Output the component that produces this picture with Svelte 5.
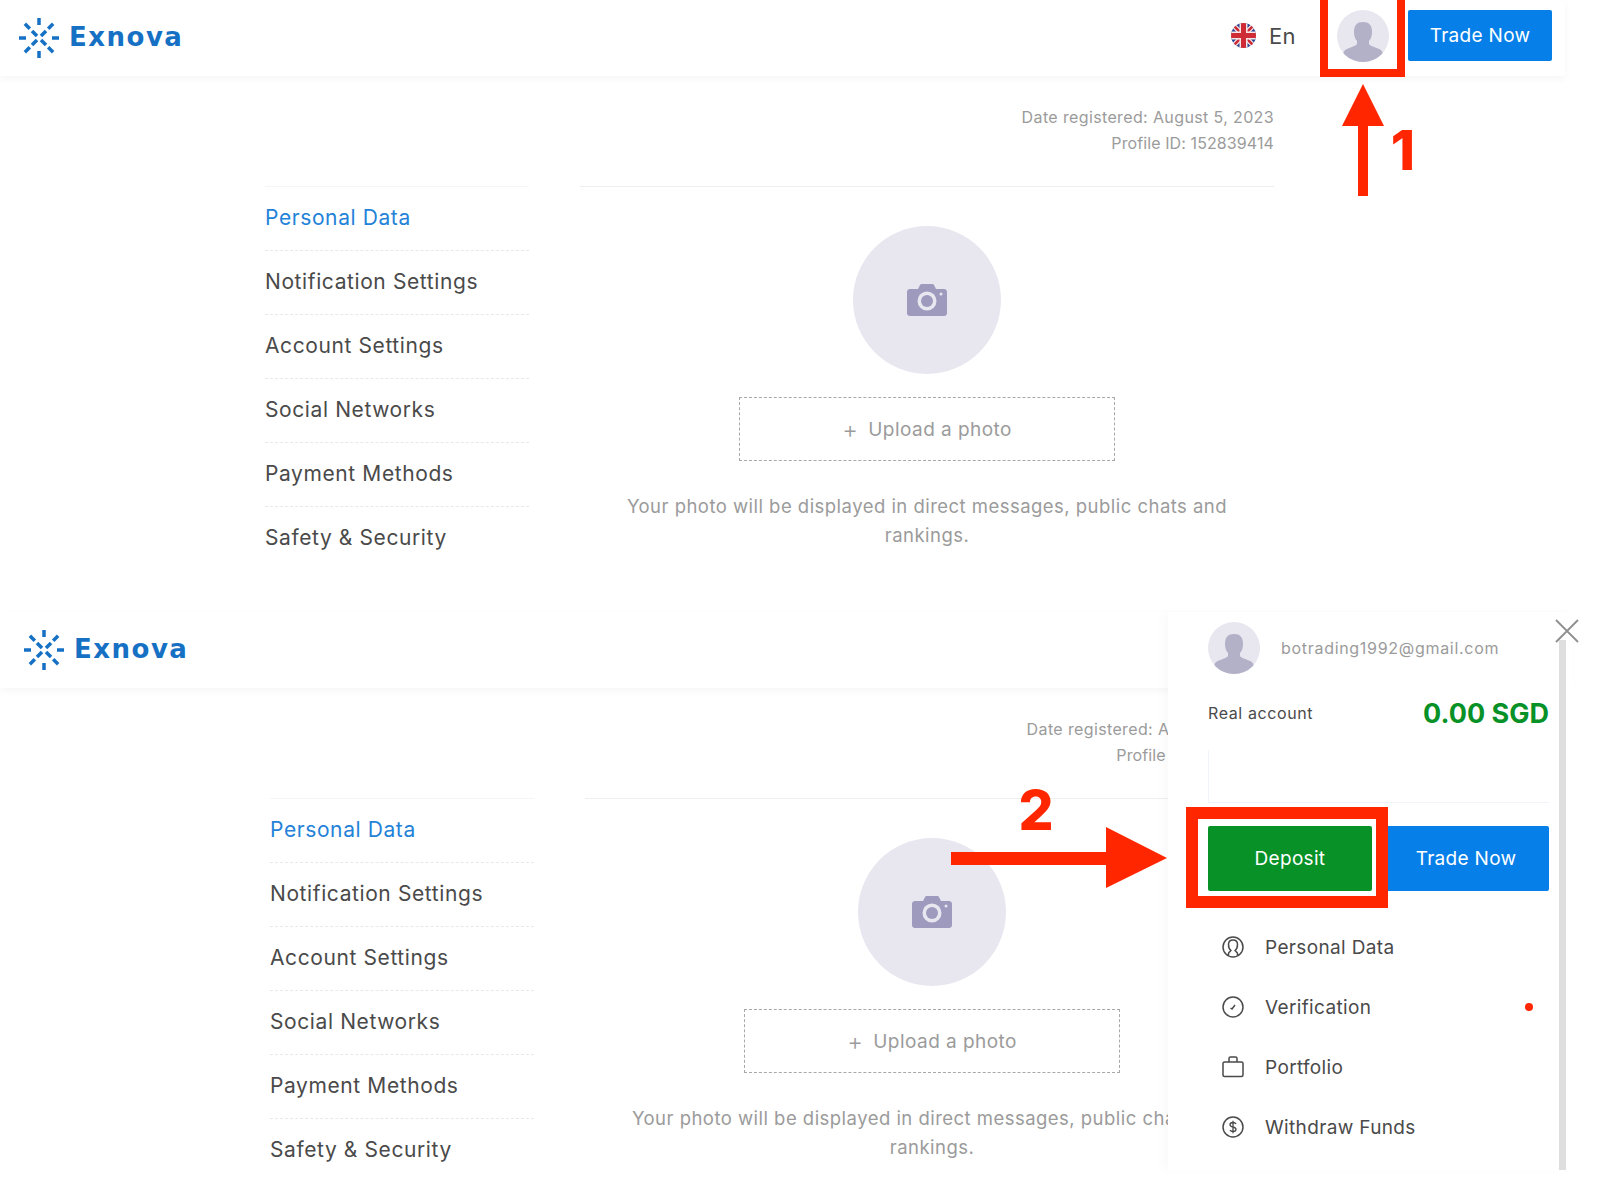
<script>
	const sideItems = ['Personal Data', 'Notification Settings', 'Account Settings', 'Social Networks', 'Payment Methods', 'Safety & Security'];
	const logoSpokes = [0, 45, 90, 135, 180, 225, 270, 315];
</script>

{#snippet logo()}
	<div class="logo">
		<svg width="42" height="42" viewBox="-21 -21 42 42" fill="none" stroke="#1670c4" stroke-width="3.500" stroke-linecap="butt">
			{#each logoSpokes as a}
				<line x1="0" y1="-20" x2="0" y2="-13" transform="rotate({a})" />
			{/each}
			<line x1="-7" y1="-7" x2="-2" y2="-2" /><line x1="7" y1="-7" x2="2" y2="-2" />
			<line x1="-7" y1="7" x2="-2" y2="2" /><line x1="7" y1="7" x2="2" y2="2" />
		</svg>
		<span class="logo-text">Exnova</span>
	</div>
{/snippet}

{#snippet person(size)}
	<svg class="person" width={size} height={size} viewBox="0 0 52 52">
		<circle cx="26" cy="26" r="26" fill="#e8e7f0" />
		<clipPath id="avatar-clip"><circle cx="26" cy="26" r="26" /></clipPath>
		<path clip-path="url(#avatar-clip)" d="M17 22c0-7 3-10 9-10s9 3 9 10c0 4-1 7-3 9v3c1 2 6 3 10 5 3 1 5 4 5 13H5c0-9 2-12 5-13 4-2 9-3 10-5v-3c-2-2-3-5-3-9z" fill="#b3b1c8" />
	</svg>
{/snippet}

{#snippet page()}
	<header class="topbar">
		{@render logo()}
	</header>
	<div class="meta">
		<div>Date registered: August 5, 2023</div>
		<div class="profile-id">Profile ID: 152839414</div>
	</div>
	<div class="content">
		<nav class="side">
			{#each sideItems as item, i}
				<div class="side-item" class:active={i === 0}>{item}</div>
			{/each}
		</nav>
		<main class="main">
			<div class="photo">
				<svg width="40" height="32" viewBox="0 0 40 32">
					<path d="M3 5h8l2-4c.3-.6 1-1 1.500-1h11c.6 0 1.200.4 1.500 1l2 4h8c1.700 0 3 1.300 3 3v21c0 1.700-1.300 3-3 3H3c-1.700 0-3-1.300-3-3V8c0-1.700 1.300-3 3-3z" fill="#9d9abd" />
					<circle cx="20" cy="17" r="9.500" fill="#e8e7f0" />
					<circle cx="20" cy="17" r="6" fill="#9d9abd" />
					<circle cx="34" cy="10" r="1.500" fill="#e8e7f0" />
				</svg>
			</div>
			<div class="upload"><span class="plus">+</span>Upload a photo</div>
			<p class="hint">Your photo will be displayed in direct messages, public chats and rankings.</p>
		</main>
	</div>
{/snippet}

<div class="sheet">
	<section class="shot">
		{@render page()}
		<div class="top-actions">
			<svg class="flag" width="25" height="25" viewBox="0 0 25 25">
				<clipPath id="flag-clip"><circle cx="12.500" cy="12.500" r="12.500" /></clipPath>
				<g clip-path="url(#flag-clip)">
					<rect width="25" height="25" fill="#27408f" />
					<path d="M0 0L25 25M25 0L0 25" stroke="#f4e6e6" stroke-width="5" />
					<path d="M0 0L25 25M25 0L0 25" stroke="#cf2b36" stroke-width="2.500" />
					<path d="M12.500 0V25M0 12.500H25" stroke="#f4e6e6" stroke-width="8" />
					<path d="M12.500 0V25M0 12.500H25" stroke="#cf2b36" stroke-width="5" />
				</g>
			</svg>
			<span class="lang">En</span>
			{@render person(52)}
			<button class="btn blue top-trade">Trade Now</button>
		</div>
	</section>

	<section class="shot second">
		{@render page()}
		<aside class="panel">
			<div class="panel-body">
				<div class="panel-user">
					{@render person(52)}
					<span class="email">botrading1992@gmail.com</span>
				</div>
				<div class="balance">
					<span>Real account</span>
					<strong>0.00 SGD</strong>
				</div>
				<div class="empty-box"></div>
				<div class="panel-btns">
					<button class="btn green">Deposit</button>
					<button class="btn blue">Trade Now</button>
				</div>
				<ul class="menu">
					<li>
						<svg width="22" height="22" viewBox="0 0 22 22" fill="none" stroke="#4a4a4a" stroke-width="1.500">
							<circle cx="11" cy="11" r="10" />
							<path d="M6.500 19.500v-2c0-1.500 2-2 2.500-3-2-1.500-2.500-3.500-2.500-6 0-3 2-4.500 4.500-4.500s4.500 1.500 4.500 4.500c0 2.500-.5 4.500-2.500 6 .5 1 2.500 1.500 2.500 3v2" />
						</svg>
						<span>Personal Data</span>
					</li>
					<li>
						<svg width="22" height="22" viewBox="0 0 22 22" fill="none" stroke="#4a4a4a" stroke-width="1.500">
							<circle cx="11" cy="11" r="10" />
							<path d="M8.500 12l1.500 1 3-4" />
						</svg>
						<span>Verification</span>
						<i class="dot"></i>
					</li>
					<li>
						<svg width="22" height="22" viewBox="0 0 22 22" fill="none" stroke="#4a4a4a" stroke-width="1.500">
							<rect x="1" y="6" width="20" height="14.500" rx="1.500" />
							<path d="M7 6V2.500C7 1.700 7.700 1 8.500 1h5c.8 0 1.500.7 1.500 1.500V6" />
						</svg>
						<span>Portfolio</span>
					</li>
					<li>
						<svg width="22" height="22" viewBox="0 0 22 22" fill="none" stroke="#4a4a4a" stroke-width="1.500">
							<circle cx="11" cy="11" r="10" />
							<path d="M14 8c-.5-1-1.500-1.500-3-1.500-1.700 0-3 .8-3 2.200 0 3 6 1.600 6 4.600 0 1.400-1.300 2.200-3 2.200-1.500 0-2.500-.5-3-1.500M11 4.800v12.400" stroke-width="1.300" />
						</svg>
						<span>Withdraw Funds</span>
					</li>
				</ul>
			</div>
			<div class="scrollbar"></div>
			<svg class="close" width="24" height="24" viewBox="0 0 24 24" stroke="#8f8f8f" stroke-width="1.800">
				<path d="M1 1L23 23M23 1L1 23" />
			</svg>
		</aside>
	</section>

	<!-- tutorial annotations painted over the screenshots -->
	<svg class="marks" width="1600" height="1192" viewBox="0 0 1600 1192">
		<rect x="1324" y="-4" width="77" height="77" fill="none" stroke="#ff2600" stroke-width="8" />
		<path d="M1363 84L1384 126H1368V196H1358V126H1342Z" fill="#ff2600" />
		<text class="num" x="1403" y="170">1</text>
		<rect x="1192" y="813" width="190" height="89" fill="none" stroke="#ff2600" stroke-width="12" />
		<path d="M951 852H1106V827L1167 858L1106 888V865H951Z" fill="#ff2600" />
		<text class="num" x="1036" y="830">2</text>
	</svg>
</div>

<style>
	:global(body) {
		margin: 0;
		background: #fff;
	}

	.sheet {
		position: relative;
		width: 1600px;
		height: 1192px;
		overflow: hidden;
		font-family: Inter, "Open Sans", sans-serif;
		color: #4a4a4a;
	}

	.shot {
		position: relative;
		width: 1565px;
		height: 612px;
	}

	.second {
		margin-left: 5px;
	}

	.topbar {
		height: 76px;
		display: flex;
		align-items: center;
		padding-left: 18px;
		box-shadow: 0 3px 8px rgba(0, 0, 0, 0.04);
	}

	.second .topbar {
		margin-left: -5px;
		padding-left: 23px;
	}

	.logo {
		display: flex;
		align-items: center;
		gap: 9px;
	}

	.logo-text {
		font-family: "DejaVu Sans", sans-serif;
		font-weight: 700;
		font-size: 26px;
		line-height: 32px;
		margin-top: -3px;
		color: #1670c4;
		letter-spacing: 1.5px;
	}

	.top-actions {
		position: absolute;
		top: 10px;
		left: 1231px;
		display: flex;
		align-items: center;
		height: 51px;
	}

	.lang {
		font-size: 22px;
		letter-spacing: 0.4px;
		margin: 0 38px 0 13px;
		width: 30px;
	}

	.person {
		display: block;
		flex: none;
	}

	.btn {
		border: 0;
		border-radius: 2px;
		color: #fff;
		font-family: inherit;
		font-size: 19px;
		letter-spacing: 0.3px;
		padding: 0;
	}

	.blue {
		background: #067fe8;
	}

	.green {
		background: #079127;
	}

	.top-trade {
		width: 144px;
		height: 51px;
		margin-left: 19px;
	}

	.meta {
		width: 1274px;
		height: 110px;
		box-sizing: border-box;
		padding-top: 28px;
		text-align: right;
		font-size: 16px;
		letter-spacing: 0.37px;
		line-height: 26px;
		color: #9b9b9b;
	}

	.profile-id {
		letter-spacing: 0.1px;
	}

	.content {
		display: flex;
		padding-left: 265px;
	}

	.side {
		width: 264px;
		margin-right: 51px;
		border-top: 1px solid #f5f5f5;
	}

	.side-item {
		height: 63px;
		line-height: 62px;
		font-size: 21px;
		letter-spacing: 0.6px;
		border-bottom: 1px dashed #e8e8e8;
	}

	.side-item:last-child {
		border-bottom: 0;
	}

	.active {
		color: #2382d8;
	}

	.main {
		width: 694px;
		border-top: 1px solid #eeeeee;
		display: flex;
		flex-direction: column;
		align-items: center;
		padding-top: 39px;
	}

	.photo {
		width: 148px;
		height: 148px;
		border-radius: 50%;
		background: #e8e7f0;
		display: flex;
		align-items: center;
		justify-content: center;
	}

	.upload {
		width: 376px;
		height: 64px;
		box-sizing: border-box;
		margin-top: 23px;
		border: 1px dashed #a8a8a8;
		display: flex;
		align-items: center;
		justify-content: center;
		font-size: 19px;
		letter-spacing: 0.45px;
		color: #9b9b9b;
	}

	.plus {
		font-size: 24px;
		margin-right: 10px;
		font-weight: 300;
	}

	.hint {
		width: 640px;
		margin: 31px 0 0;
		text-align: center;
		font-size: 18.500px;
		letter-spacing: 0.47px;
		line-height: 29px;
		color: #9b9b9b;
	}

	.panel {
		position: absolute;
		top: 0;
		left: 1163px;
		width: 405px;
		height: 558px;
		background: #fff;
		box-shadow: -6px 0 8px rgba(0, 0, 0, 0.02);
		display: flex;
	}

	.panel-body {
		width: 341px;
		margin-left: 40px;
	}

	.panel-user {
		display: flex;
		align-items: center;
		gap: 21px;
		height: 52px;
		margin-top: 10px;
	}

	.email {
		font-size: 16px;
		letter-spacing: 0.7px;
		color: #9b9b9b;
	}

	.balance {
		display: flex;
		justify-content: space-between;
		align-items: center;
		margin-top: 21px;
		height: 36px;
		font-size: 16px;
		letter-spacing: 0.6px;
	}

	.balance strong {
		font-size: 27px;
		font-weight: 700;
		letter-spacing: 0;
		color: #079127;
	}

	.empty-box {
		height: 52px;
		margin-top: 19px;
		border-left: 1px solid #f0f4fa;
		border-bottom: 1px solid #f0f4fa;
	}

	.panel-btns {
		display: flex;
		gap: 11px;
		margin-top: 23px;
	}

	.panel-btns .btn {
		height: 65px;
	}

	.panel-btns .green {
		width: 164px;
	}

	.panel-btns .blue {
		flex: 1;
	}

	.menu {
		list-style: none;
		margin: 26px 0 0;
		padding: 0 0 0 14px;
	}

	.menu li {
		display: flex;
		align-items: center;
		height: 60px;
		font-size: 19px;
		letter-spacing: 0.35px;
	}

	.menu li svg {
		margin-right: 21px;
		flex: none;
	}

	.dot {
		width: 8px;
		height: 8px;
		border-radius: 50%;
		background: #ff2600;
		margin-left: auto;
		margin-right: 16px;
	}

	.scrollbar {
		width: 7px;
		margin: 28px 0 0 10px;
		background: #dedede;
	}

	.close {
		position: absolute;
		top: 7px;
		left: 387px;
	}

	.marks {
		position: absolute;
		top: 0;
		left: 0;
		pointer-events: none;
	}

	.num {
		font-family: Inter, sans-serif;
		font-weight: 800;
		font-size: 55px;
		fill: #ff2600;
		text-anchor: middle;
	}
</style>
